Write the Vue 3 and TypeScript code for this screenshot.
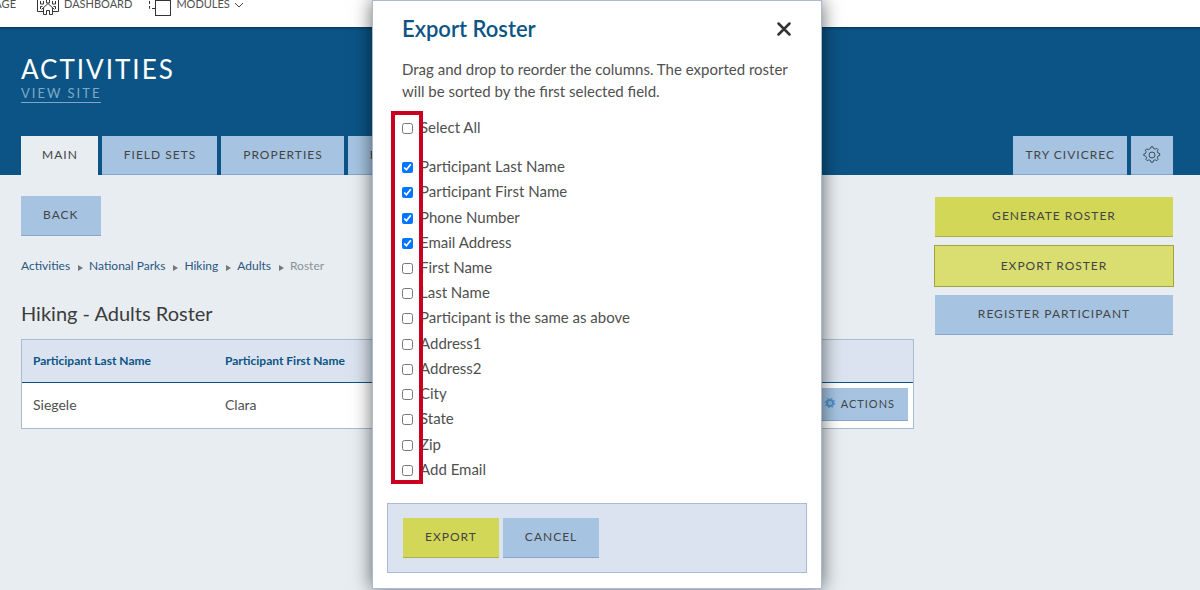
<script setup lang="ts">
import { ref, computed } from 'vue'

interface Field {
  id: string
  label: string
  checked: boolean
}

const tabs = ['Main', 'Field Sets', 'Properties', 'F']
const crumbs = ['Activities', 'National Parks', 'Hiking', 'Adults']

const names = [
  'Participant Last Name',
  'Participant First Name',
  'Phone Number',
  'Email Address',
  'First Name',
  'Last Name',
  'Participant is the same as above',
  'Address1',
  'Address2',
  'City',
  'State',
  'Zip',
  'Add Email',
]

const fields = ref<Field[]>(
  names.map((label, i) => ({ id: `field-${i}`, label, checked: i < 4 })),
)

const allSelected = computed({
  get: () => fields.value.every((f) => f.checked),
  set: (value: boolean) => fields.value.forEach((f) => (f.checked = value)),
})
</script>

<template>
  <div class="page">
    <nav class="topbar" aria-label="Site">
      <a class="toplink clipped" href="#">AGE</a>
      <a class="toplink dashboard" href="#">
        <svg width="24" height="20" viewBox="0 0 24 20" fill="none" stroke="#333" stroke-width="1">
          <path d="M7.500 15.500H1.500V.5H22.500V15.500H16.500" />
          <path d="M4.500 5v3h3V5M10.500 4v3h3V4M16.500 5v3h3V5M4.500 13v-2.500h2M19.500 13v-2.500h-2" />
          <path d="M5.500 13.500L12 7.500l6.500 6M7.500 12v6.500h3v-4h3v4h3V12" />
        </svg>
        <span>DASHBOARD</span>
      </a>
      <a class="toplink" href="#">
        <svg width="24" height="20" viewBox="0 0 24 20" fill="none" stroke="#333" stroke-width="1">
          <path d="M1.500 0v12.500H7" stroke-dasharray="3 2" />
          <rect x="7.500" y="4.500" width="15" height="15" />
        </svg>
        <span>MODULES</span>
        <svg class="chev" width="10" height="6" viewBox="0 0 10 6" fill="none" stroke="#444" stroke-width="1">
          <path d="M1 1l4 4 4-4" />
        </svg>
      </a>
    </nav>

    <header class="banner">
      <h1>ACTIVITIES</h1>
      <a class="view-site" href="#">VIEW SITE</a>
      <div class="tabrow">
        <nav class="tabs" aria-label="Sections">
          <a v-for="(t, i) in tabs" :key="t" href="#" class="tab" :class="{ active: i === 0 }">{{ t }}</a>
        </nav>
        <div class="tabs">
          <a class="tab try" href="#">Try CivicRec</a>
          <button class="tab gear" type="button" aria-label="Settings">
            <svg width="18" height="18" viewBox="0 0 18 18" fill="none" stroke="#3c4a58" stroke-width="1">
              <path d="M7.500 2.500L8 .8h2l.5 1.700 1.700.7 1.600-.9 1.400 1.400-.9 1.600.7 1.700 1.700.5v2l-1.700.5-.7 1.700.9 1.600-1.400 1.400-1.600-.9-1.700.7-.5 1.700H8l-.5-1.700-1.700-.7-1.600.9-1.400-1.400.9-1.600L2.500 10 .8 9.500V8l1.700-.5.7-1.700-.9-1.600 1.400-1.400 1.600.9z" />
              <circle cx="9" cy="9" r="3" />
            </svg>
          </button>
        </div>
      </div>
    </header>

    <main class="content">
      <section class="primary">
        <button class="btn back" type="button">Back</button>
        <nav class="crumbs" aria-label="Breadcrumb">
          <template v-for="c in crumbs" :key="c">
            <a href="#">{{ c }}</a>
            <i class="arrow"></i>
          </template>
          <span>Roster</span>
        </nav>
        <h2>Hiking - Adults Roster</h2>
        <table class="roster">
          <thead>
            <tr>
              <th class="col-name">Participant Last Name</th>
              <th class="col-name">Participant First Name</th>
              <th></th>
            </tr>
          </thead>
          <tbody>
            <tr>
              <td>Siegele</td>
              <td>Clara</td>
              <td class="cell-actions">
                <button class="btn actions" type="button">
                  <svg width="12" height="12" viewBox="0 0 12 12">
                    <circle cx="6" cy="6" r="3" fill="none" stroke="#4c90c8" stroke-width="2" />
                    <circle cx="6" cy="6" r="4.700" fill="none" stroke="#5f9dcf" stroke-width="1.300" stroke-dasharray="1.900 1.790" />
                    <circle cx="6" cy="6" r="1.500" fill="#7fb0da" />
                  </svg>
                  Actions
                </button>
              </td>
            </tr>
          </tbody>
        </table>
      </section>

      <aside class="side">
        <button class="btn lime" type="button">Generate Roster</button>
        <button class="btn lime current" type="button">Export Roster</button>
        <button class="btn" type="button">Register Participant</button>
      </aside>
    </main>

    <div class="overlay">
      <form class="modal" role="dialog" aria-labelledby="modal-title" @submit.prevent>
        <div class="modal-head">
          <h2 id="modal-title">Export Roster</h2>
          <button class="close" type="button" aria-label="Close">
            <svg width="14" height="14" viewBox="0 0 14 14" fill="none" stroke="#333" stroke-width="2.500" stroke-linecap="round">
              <path d="M1.500 1.500l11 11M12.500 1.500l-11 11" />
            </svg>
          </button>
        </div>
        <p class="intro">Drag and drop to reorder the columns. The exported roster will be sorted by the first selected field.</p>
        <div class="picker">
          <div class="field all">
            <input id="select-all" v-model="allSelected" type="checkbox" />
            <label for="select-all">Select All</label>
          </div>
          <ul class="fields">
            <li v-for="f in fields" :key="f.id" class="field">
              <input :id="f.id" v-model="f.checked" type="checkbox" />
              <label :for="f.id">{{ f.label }}</label>
            </li>
          </ul>
          <div class="marker"></div>
        </div>
        <div class="modal-foot">
          <button class="btn lime" type="submit">Export</button>
          <button class="btn" type="button">Cancel</button>
        </div>
      </form>
    </div>
  </div>
</template>

<style>
html,
body {
  background: #e8edf1;
}
</style>

<style scoped>
* {
  box-sizing: border-box;
}
.page {
  position: relative;
  min-height: 100vh;
  overflow: hidden;
  font-family: Lato, "Open Sans", sans-serif;
  font-size: 15px;
  color: #505050;
}
h1,
h2,
p,
ul {
  margin: 0;
  padding: 0;
  font-weight: 400;
}
a {
  color: inherit;
  text-decoration: none;
}
button {
  font: inherit;
  color: inherit;
  cursor: pointer;
}

.topbar {
  display: flex;
  align-items: flex-end;
  gap: 16px;
  height: 27px;
  padding-bottom: 11px;
  overflow: hidden;
  background: #fff;
  font-size: 11px;
}
.toplink {
  display: flex;
  align-items: flex-end;
  gap: 4px;
}
.toplink span,
.clipped {
  line-height: 14px;
  padding-bottom: 5px;
}
.clipped {
  width: 16px;
  justify-content: flex-end;
}
.dashboard {
  margin-left: 4px;
}
.chev {
  margin-bottom: 8px;
}

.banner {
  display: flex;
  flex-direction: column;
  align-items: flex-start;
  height: 148px;
  padding: 26px 27px 0 21px;
  background: #0c5485;
  box-shadow: inset 0 3px 3px -2px rgba(0, 0, 0, 0.4);
}
h1 {
  color: #fff;
  font-size: 26px;
  line-height: 32px;
  letter-spacing: 2px;
}
.view-site {
  color: #7fa8c8;
  font-size: 13px;
  line-height: 17px;
  letter-spacing: 2px;
  border-bottom: 1px solid #7fa8c8;
}
.tabrow {
  display: flex;
  justify-content: space-between;
  align-self: stretch;
  margin-top: auto;
}
.tabs {
  display: flex;
  gap: 4px;
}
.tab {
  height: 39px;
  padding: 0 21px 0 22px;
  border: 0;
  border-bottom: 1px solid #88a6c6;
  background: #a6c4e2;
  color: #444;
  font-size: 12px;
  line-height: 38px;
  letter-spacing: 1px;
  text-transform: uppercase;
}
.active {
  padding: 0 20px 0 21px;
  background: #e8edf1;
  border-color: #e8edf1;
}
.try {
  padding: 0 12px;
}
.gear {
  display: flex;
  align-items: center;
  justify-content: center;
  width: 42px;
  padding: 0;
}

.content {
  display: grid;
  grid-template-columns: 1fr 238px;
  gap: 21px;
  padding: 21px 27px 0 21px;
}
.btn {
  height: 40px;
  padding: 0 22px 2px;
  border: 0;
  border-bottom: 1px solid #88a6c6;
  background: #a6c4e2;
  color: #444;
  font-size: 12px;
  letter-spacing: 1px;
  text-transform: uppercase;
}
.lime {
  background: #d3d757;
  border-color: #adb14a;
}
.side {
  display: flex;
  flex-direction: column;
  gap: 9px;
  padding-top: 1px;
}
.current {
  background: #dadd70;
  outline: 1px solid #a0a43c;
  border: 0;
}
.crumbs {
  display: flex;
  align-items: center;
  margin-top: 21px;
  color: #8c9299;
  font-size: 12px;
  line-height: 18px;
}
.crumbs a {
  color: #2b567f;
}
.arrow {
  margin: 3px 6px 0 8px;
  border: 3px solid transparent;
  border-left: 5px solid #777;
  border-right: 0;
}
.primary h2 {
  margin-top: 25px;
  color: #3c3c3c;
  font-size: 20px;
  line-height: 26px;
}
.roster {
  width: 100%;
  margin-top: 13px;
  border: 1px solid #a9bad1;
  border-spacing: 0;
  background: #fff;
  table-layout: fixed;
}
.roster th {
  height: 43px;
  padding: 0 11px 2px;
  border-bottom: 1px solid #0c5485;
  background: #dae3ef;
  color: #0c5485;
  font-size: 12px;
  font-weight: 700;
  text-align: left;
}
.col-name {
  width: 192px;
}
.roster td {
  height: 45px;
  padding: 0 11px 2px;
  font-size: 14px;
}
.roster .cell-actions {
  padding: 0 5px 2px;
  text-align: right;
}
.actions {
  display: inline-flex;
  align-items: center;
  gap: 5px;
  height: 33px;
  padding: 0 13px 2px;
  vertical-align: middle;
  font-size: 11px;
}

.overlay {
  position: absolute;
  inset: 0;
  display: flex;
  align-items: flex-start;
  justify-content: center;
  padding-right: 6px;
}
.modal {
  width: 450px;
  padding: 13px 14px 15px;
  border: 1px solid #a9bad1;
  background: #fff;
  box-shadow: 0 0 18px rgba(0, 0, 0, 0.6);
}
.modal-head {
  display: flex;
  align-items: center;
  justify-content: space-between;
  padding: 0 16px 0 15px;
}
.modal-head h2 {
  color: #0c5485;
  font-size: 22px;
  font-weight: 600;
  line-height: 30px;
}
.close {
  display: flex;
  padding: 0;
  border: 0;
  background: none;
}
.intro {
  margin: 14px 15px 0;
  line-height: 22px;
}
.picker {
  position: relative;
  padding: 13px 15px 0;
}
.field {
  display: flex;
  align-items: center;
  gap: 7px;
}
.field input {
  width: 11px;
  height: 11px;
  margin: 2px 0 0;
}
.field label {
  line-height: 25px;
}
.all {
  margin-bottom: 14px;
}
.fields {
  display: grid;
  grid-auto-rows: 1fr;
  min-height: 328px;
  list-style: none;
}
.marker {
  position: absolute;
  top: 9px;
  bottom: -2px;
  left: 4px;
  width: 32px;
  border: 4px solid #ca0020;
  pointer-events: none;
}
.modal-foot {
  display: flex;
  gap: 4px;
  margin-top: 21px;
  padding: 14px 15px;
  border: 1px solid #a9bad1;
  background: #dae3ef;
}
</style>
